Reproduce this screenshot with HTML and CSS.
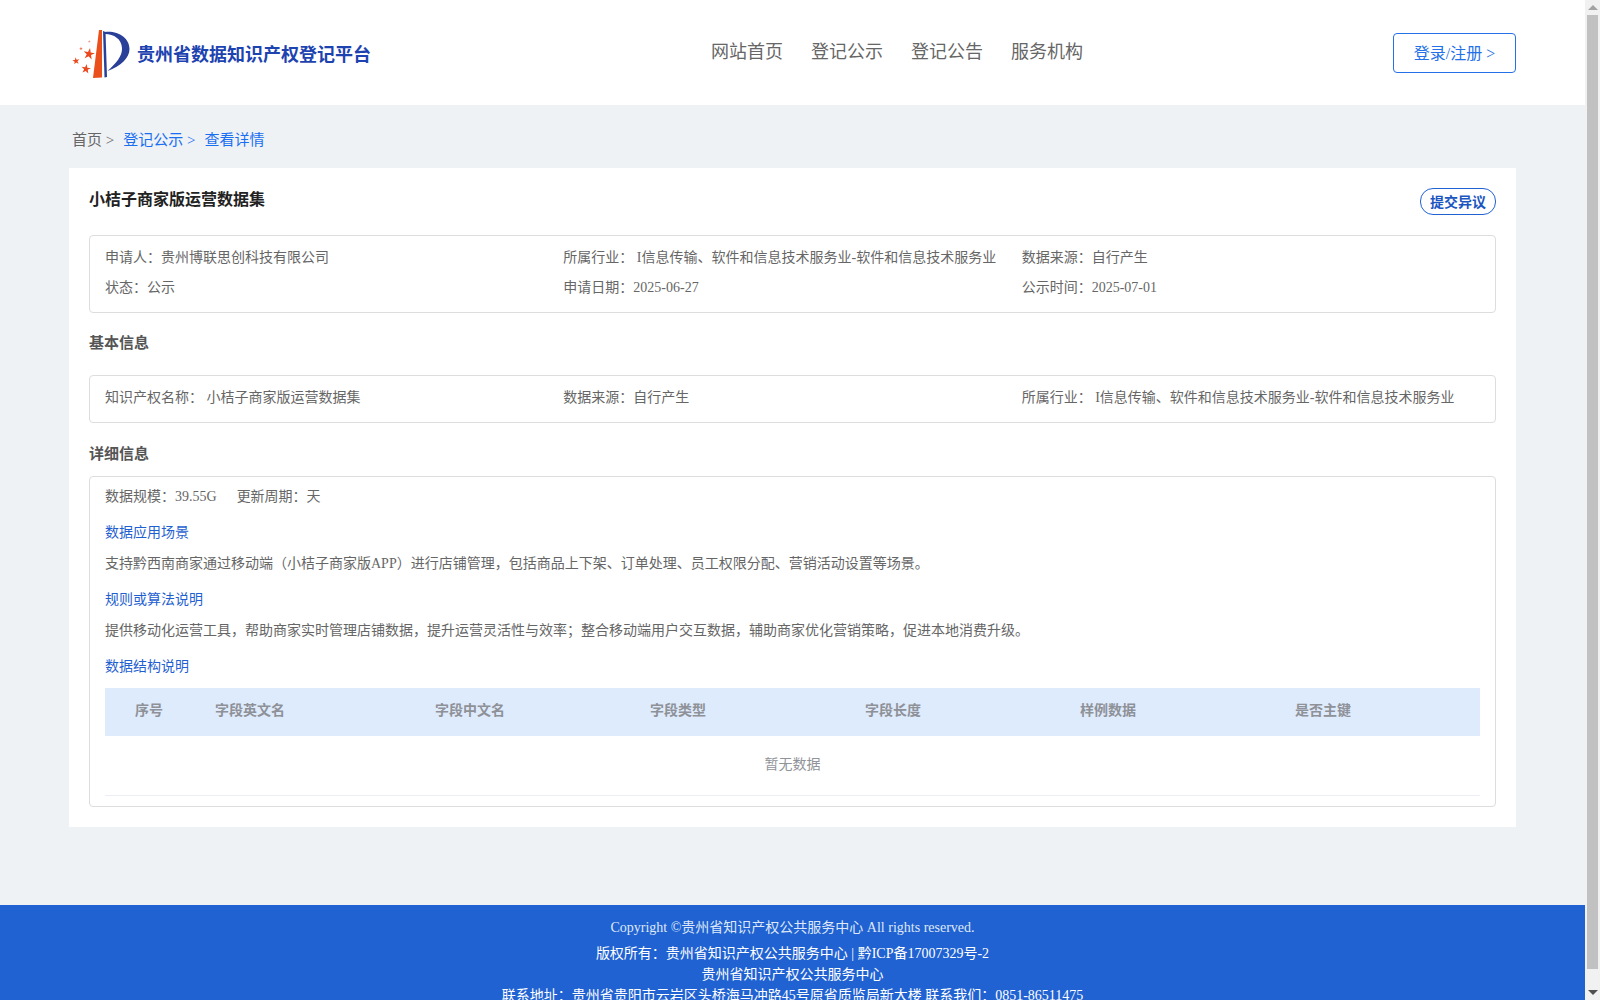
FILE: index.html
```html
<!DOCTYPE html>
<html lang="zh-CN">
<head>
<meta charset="utf-8">
<title>贵州省数据知识产权登记平台</title>
<link rel="stylesheet" href="styles.css">
</head>
<body>
<div class="app">
  <div class="page">
    <header class="header">
      <a class="brand">
        <svg class="logo" viewBox="0 0 62 54" width="62" height="54" aria-hidden="true">
          <defs>
            <polygon id="star" points="0,-1 .225,-.309 .951,-.309 .363,.118 .588,.809 0,.382 -.588,.809 -.363,.118 -.951,-.309 -.225,-.309"/>
          </defs>
          <polygon fill="#e9501c" points="29,3 32,3 32,50.5 23,51"/>
          <polygon fill="#2a3f98" points="33,4 35.5,5 37,50 34.5,50.5"/>
          <path fill="#2a3f98" d="M35,5 C48,3.5 59.5,11 59.5,22 C59.5,31 51,39 37.5,44 C46,36.5 52.5,29 52,21 C51.5,12 44,7 35,7 Z"/>
          <g fill="#e9481c">
            <use href="#star" transform="translate(19,27) rotate(10) scale(6)"/>
            <use href="#star" transform="translate(6,34) rotate(-8) scale(3.8)"/>
            <use href="#star" transform="translate(16,42) rotate(8) scale(5)"/>
            <use href="#star" transform="translate(11,21.5) scale(2)" opacity=".75"/>
            <use href="#star" transform="translate(19.3,14.5) scale(1.5)" opacity=".6"/>
          </g>
        </svg>
        <span class="brand-name">贵州省数据知识产权登记平台</span>
      </a>
      <nav class="nav">
        <a>网站首页</a>
        <a>登记公示</a>
        <a>登记公告</a>
        <a>服务机构</a>
      </nav>
      <a class="login">登录/注册 &gt;</a>
    </header>

    <main class="content">
      <div class="crumbs">
        <span class="crumb">首页 &gt;</span>
        <span class="crumb crumb-link">登记公示 &gt;</span>
        <span class="crumb crumb-link crumb-last">查看详情</span>
      </div>

      <section class="card">
        <div class="title-row">
          <h1 class="title">小桔子商家版运营数据集</h1>
          <a class="objection">提交异议</a>
        </div>

        <div class="box box-summary">
          <div class="cols">
            <div class="cell">申请人：贵州博联思创科技有限公司</div>
            <div class="cell">所属行业： I信息传输、软件和信息技术服务业-软件和信息技术服务业</div>
            <div class="cell">数据来源：自行产生</div>
            <div class="cell">状态：公示</div>
            <div class="cell">申请日期：2025-06-27</div>
            <div class="cell">公示时间：2025-07-01</div>
          </div>
        </div>

        <h2 class="section section-basic">基本信息</h2>
        <div class="box box-basic">
          <div class="cols">
            <div class="cell">知识产权名称： 小桔子商家版运营数据集</div>
            <div class="cell">数据来源：自行产生</div>
            <div class="cell">所属行业： I信息传输、软件和信息技术服务业-软件和信息技术服务业</div>
          </div>
        </div>

        <h2 class="section section-detail">详细信息</h2>
        <div class="box box-detail">
          <div class="meta"><span class="meta-item">数据规模：39.55G</span><span>更新周期：天</span></div>
          <h3 class="sub">数据应用场景</h3>
          <p class="para">支持黔西南商家通过移动端（小桔子商家版APP）进行店铺管理，包括商品上下架、订单处理、员工权限分配、营销活动设置等场景。</p>
          <h3 class="sub">规则或算法说明</h3>
          <p class="para">提供移动化运营工具，帮助商家实时管理店铺数据，提升运营灵活性与效率；整合移动端用户交互数据，辅助商家优化营销策略，促进本地消费升级。</p>
          <h3 class="sub">数据结构说明</h3>
          <table class="fields">
            <colgroup>
              <col class="c-seq"><col class="c-en"><col class="c-std"><col class="c-std"><col class="c-std"><col class="c-std"><col class="c-last">
            </colgroup>
            <thead>
              <tr>
                <th class="th-seq">序号</th>
                <th>字段英文名</th>
                <th>字段中文名</th>
                <th>字段类型</th>
                <th>字段长度</th>
                <th>样例数据</th>
                <th>是否主键</th>
              </tr>
            </thead>
            <tbody>
              <tr><td class="empty" colspan="7">暂无数据</td></tr>
            </tbody>
          </table>
        </div>
      </section>
    </main>

    <footer class="footer">
      <p class="copy">Copyright ©贵州省知识产权公共服务中心 All rights reserved.</p>
      <p>版权所有：贵州省知识产权公共服务中心 | 黔ICP备17007329号-2</p>
      <p>贵州省知识产权公共服务中心</p>
      <p>联系地址：贵州省贵阳市云岩区头桥海马冲路45号原省质监局新大楼 联系我们：0851-86511475</p>
    </footer>
  </div>

  <div class="scrollbar" aria-hidden="true">
    <div class="sb-btn"><span class="arrow-up"></span></div>
    <div class="sb-thumb"></div>
    <div class="sb-track"></div>
    <div class="sb-btn"><span class="arrow-down"></span></div>
  </div>
</div>
</body>
</html>
```

FILE: styles.css
```css
* { box-sizing: border-box; }

html, body {
  margin: 0;
  height: 100%;
  overflow: hidden;
}

body {
  font-family: "Liberation Serif", "Noto Sans CJK SC", serif;
  font-size: 14px;
  color: #666;
  background: #eff2f5;
}

.app {
  display: flex;
  height: 1000px;
}

.page {
  flex: 1;
  min-width: 0;
  height: 1000px;
  overflow: hidden;
}

/* header */
.header {
  display: grid;
  grid-template-columns: 641px 1fr auto;
  align-items: center;
  height: 105px;
  padding: 0 69px 0 70px;
  background: #fff;
}

.brand {
  display: flex;
  align-items: center;
  gap: 5px;
}

.logo {
  display: block;
  margin-top: 2px;
}

.brand-name {
  font-size: 18px;
  font-weight: 700;
  line-height: 24px;
  color: #1d43b0;
  margin-top: 4px;
}

.nav {
  display: flex;
  gap: 28px;
  padding-bottom: 2px;
  font-size: 18px;
  line-height: 24px;
  color: #666;
}

.login {
  display: flex;
  align-items: center;
  justify-content: center;
  width: 123px;
  height: 40px;
  margin-top: 1px;
  padding-bottom: 2px;
  border: 1px solid #2470e8;
  border-radius: 4px;
  font-size: 16px;
  color: #2470e8;
}

/* breadcrumb */
.content {
  padding: 0 69px 78px;
}

.crumbs {
  display: flex;
  height: 63px;
  padding: 25px 0 0 3px;
  font-size: 15px;
  line-height: 20px;
}

.crumb { margin-right: 9px; }
.crumb-link { color: #1a6ef0; }
.crumb-last { margin-right: 0; }

/* card */
.card {
  padding: 20px 20px 20px;
  background: #fff;
}

.title-row {
  display: flex;
  justify-content: space-between;
  align-items: flex-start;
  height: 27px;
}

.title {
  margin: 0;
  font-size: 16px;
  line-height: 24px;
  font-weight: 700;
  color: #222;
}

.objection {
  display: flex;
  align-items: center;
  justify-content: center;
  width: 76px;
  height: 27px;
  padding-bottom: 2px;
  border: 1px solid #2062d2;
  border-radius: 13px;
  font-weight: 700;
  color: #1a55c0;
}

.box {
  border: 1px solid #ddd;
  border-radius: 4px;
}

.box-summary {
  margin-top: 20px;
  padding: 7px 15px 9px;
}

.box-basic {
  padding: 7px 15px 9px;
}

.box-detail {
  padding: 10px 15px 10px;
}

.cols {
  display: grid;
  grid-template-columns: repeat(3, 1fr);
}

.cell {
  height: 30px;
  line-height: 30px;
  white-space: nowrap;
}

.section {
  margin: 0;
  font-size: 15px;
  line-height: 20px;
  font-weight: 700;
  color: #555;
}

.section-basic {
  margin: 20px 0 22px;
}

.section-detail {
  margin: 21px 0 12px;
}

/* detail */
.meta {
  line-height: 20px;
}

.meta-item {
  margin-right: 20px;
}

.sub {
  margin: 16px 0 11px;
  font-size: 14px;
  line-height: 20px;
  font-weight: 400;
  color: #1f5fd0;
}

.para {
  margin: 0;
  line-height: 20px;
}

/* table */
.fields {
  width: 100%;
  table-layout: fixed;
  border-collapse: collapse;
}

.c-seq { width: 110px; }
.c-en { width: 220px; }
.c-std { width: 215px; }
.c-last { width: 185px; }

.fields th {
  height: 48px;
  padding: 0 0 7px;
  text-align: left;
  font-weight: 700;
  color: #8e9197;
  background: #deebfd;
}

.fields th.th-seq {
  padding-left: 30px;
}

.empty {
  height: 59px;
  padding-bottom: 5px;
  text-align: center;
  color: #909399;
  border-bottom: 1px solid #ebeef5;
}

/* footer */
.footer {
  height: 140px;
  padding: 12px 0 0;
  text-align: center;
  color: #fff;
  background: #2062d2;
}

.footer p {
  margin: 0;
  line-height: 21px;
}

.footer .copy {
  margin-bottom: 5px;
  color: #dfe8f8;
}

/* window scrollbar */
.scrollbar {
  display: flex;
  flex-direction: column;
  flex: 0 0 15px;
  height: 1000px;
  background: #f1f1f1;
}

.sb-btn {
  display: flex;
  align-items: center;
  justify-content: center;
  height: 15px;
}

.sb-thumb {
  flex: 0 0 954px;
  margin: 0 2px;
  background: #c1c1c1;
}

.sb-track { flex: 1; }

.arrow-up {
  border-left: 5px solid transparent;
  border-right: 5px solid transparent;
  border-bottom: 5px solid #a3a3a3;
}

.arrow-down {
  border-left: 5px solid transparent;
  border-right: 5px solid transparent;
  border-top: 5px solid #505050;
}
```
